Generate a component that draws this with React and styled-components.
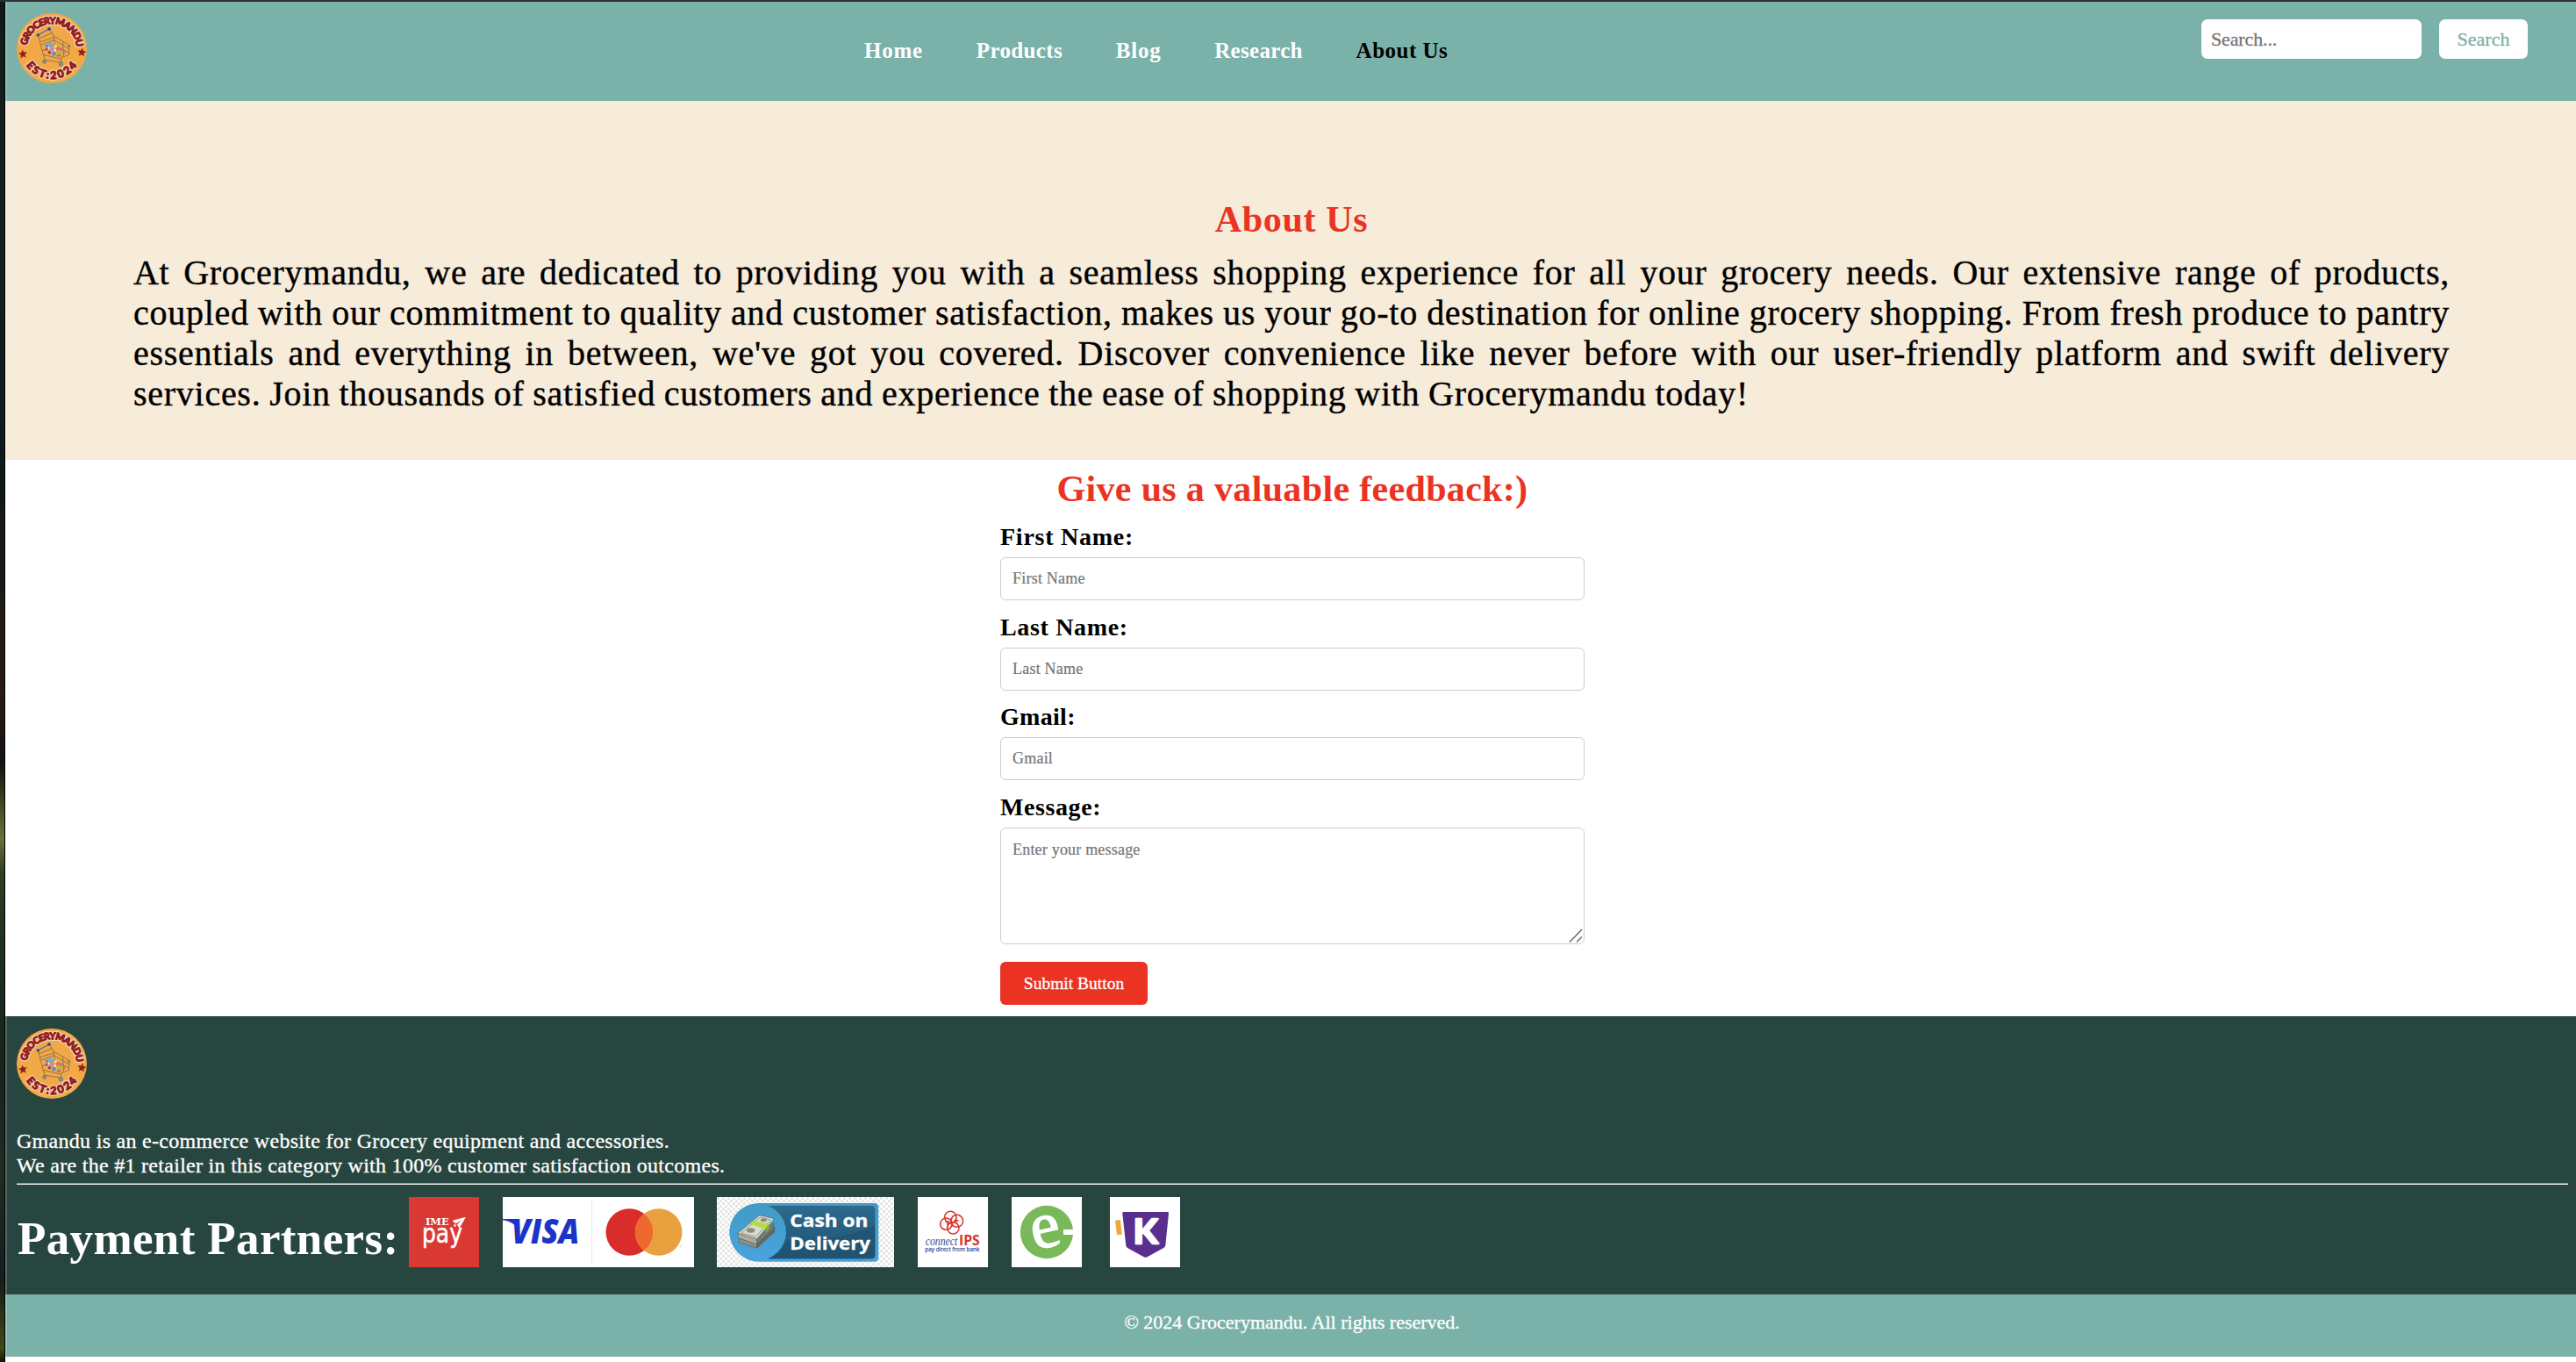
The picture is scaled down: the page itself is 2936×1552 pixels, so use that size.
import React from 'react';
import styled, { createGlobalStyle } from 'styled-components';

const serif = `"Liberation Serif", "Times New Roman", serif`;
const teal = '#7ab1a8';
const forest = '#284640';
const red = '#ea3323';

const GlobalStyle = createGlobalStyle`
  * { box-sizing: border-box; }
  body { margin: 0; background: #fff; font-family: ${serif}; color: #000; overflow: hidden; }
  h1, h2, p, ul { margin: 0; padding: 0; }
  input, textarea, button { font-family: inherit; }
`;

const Frame = styled.div`
  display: grid;
  grid-template-columns: 6px 1fr;
  height: 1552px;
  border-top: 2px solid #303033;
`;
const DesktopEdge = styled.div`
  border-right: 1px solid #000;
  background: linear-gradient(180deg, #0f1a1b 0%, #16211f 12%, #10191a 35%, #2a1a12 51%, #141210 56%, #4f5a2c 60%, #6d7038 61.5%, #2e3f22 64%, #1d3022 70%, #16241e 78%, #232b25 86%, #161e1c 94%, #3f4a14 99%, #12180a 100%);
`;
const Page = styled.div`display: flex; flex-direction: column;`;

const Header = styled.header`
  display: flex;
  align-items: flex-start;
  height: 113px;
  padding: 13px 55px 0 13px;
  background: ${teal};
  box-shadow: inset 2px 0 rgba(255, 255, 255, 0.2);
`;
const LogoSvg = styled.svg`display: block; width: 80px; height: 80px; flex: none;`;
const Nav = styled.ul`
  display: flex;
  gap: 60.8px;
  list-style: none;
  margin: 27.5px 0 0 886px;
`;
const NavItem = styled.li`
  font-size: 25px;
  line-height: 30px;
  font-weight: 700;
  white-space: nowrap;
  color: ${(p) => (p.$active ? '#000' : '#fff')};
  letter-spacing: ${(p) => p.$ls}px;
`;
const SearchForm = styled.div`display: flex; gap: 20px; margin: 7px 0 0 auto;`;
const SearchInput = styled.input`
  width: 251px;
  height: 45px;
  padding: 1px 11px 0;
  border: 0;
  border-radius: 7px;
  font-size: 22px;
  letter-spacing: -0.14px;
  background: #fff;
  -webkit-text-stroke: 0.3px;
  &::placeholder { color: #757575; opacity: 1; }
`;
const SearchButton = styled.button`
  width: 101px;
  height: 45px;
  padding: 1px 0 0;
  border: 0;
  border-radius: 7px;
  font-size: 22px;
  background: #fff;
  color: ${teal};
  -webkit-text-stroke: 0.3px;
`;

const Hero = styled.section`
  height: 409px;
  padding: 112px 144px 0 146px;
  background: #f7ebd9;
  box-shadow: inset 2px 0 rgba(255, 255, 255, 0.2);
`;
const Title = styled.h2`
  padding-left: ${(p) => p.$shift || 0}px;
  font-size: 42px;
  line-height: 46px;
  font-weight: 700;
  text-align: center;
  color: ${red};
  letter-spacing: ${(p) => p.$ls}px;
`;
const Intro = styled.p`
  margin-top: 14.5px;
  font-size: 40px;
  line-height: 46px;
  -webkit-text-stroke: 0.4px;
`;
const IntroLine = styled.span`
  display: block;
  white-space: nowrap;
  letter-spacing: 0.73px;
  word-spacing: -1px;
  text-align: justify;
  text-align-last: ${(p) => (p.$last ? 'left' : 'justify')};
`;

const Feedback = styled.section`height: 634px; padding-top: 10px; background: #fff;`;
const Form = styled.div`width: 666px; margin: 14.5px 0 0 1134px;`;
const Field = styled.div`position: relative; margin-bottom: 13px;`;
const Label = styled.label`
  display: block;
  padding-top: 0.5px;
  margin-bottom: 6px;
  font-size: 28px;
  line-height: 34px;
  font-weight: 700;
  letter-spacing: ${(p) => p.$ls}px;
`;
const Input = styled.input`
  display: block;
  width: 100%;
  height: 49px;
  padding: 0 13px;
  border: 1px solid #ccc;
  border-radius: 6px;
  font-size: 18px;
  letter-spacing: 0.22px;
  background: #fff;
  -webkit-text-stroke: 0.2px;
  &::placeholder { color: #757575; opacity: 1; }
`;
const Message = styled.textarea`
  display: block;
  width: 100%;
  height: 133px;
  padding: 13px;
  border: 1px solid #ccc;
  border-radius: 6px;
  resize: none;
  font-size: 18px;
  line-height: 22px;
  letter-spacing: 0.2px;
  background: #fff;
  -webkit-text-stroke: 0.2px;
  &::placeholder { color: #757575; opacity: 1; }
`;
const Grip = styled.svg`position: absolute; right: 2px; bottom: 2px; width: 16px; height: 16px;`;
const Submit = styled.button`
  display: block;
  width: 168px;
  height: 49px;
  margin-top: 20.5px;
  padding: 1px 0 0;
  border: 0;
  border-radius: 6px;
  font-size: 19.5px;
  color: #fff;
  background: ${red};
  -webkit-text-stroke: 0.3px;
`;

const Footer = styled.footer`
  height: 317px;
  padding: 14px 9px 0 13px;
  color: #fff;
  background: ${forest};
  box-shadow: inset 2px 0 rgba(255, 255, 255, 0.2);
`;
const Blurb = styled.p`
  padding-top: 34px;
  font-size: 24px;
  line-height: 28px;
  -webkit-text-stroke: 0.3px;
`;
const BlurbLine = styled.span`display: block; width: max-content; letter-spacing: 0.29px;`;
const Rule = styled.div`height: 2px; margin-top: 6px; border-top: 1px solid #9a9a9a; background: #eee;`;
const Partners = styled.div`display: flex; align-items: flex-start; margin-top: 14px;`;
const PartnersTitle = styled.h1`
  width: 447px;
  padding-left: 1px;
  margin-top: 16.5px;
  font-size: 53px;
  line-height: 60px;
  font-weight: 700;
  white-space: nowrap;
  letter-spacing: 0.36px;
`;
const Partner = styled.svg`
  display: block;
  flex: none;
  width: ${(p) => p.$w}px;
  height: 80px;
  margin-right: ${(p) => p.$gap}px;
  background: ${(p) => p.$bg || '#fff'};
`;
const Copyright = styled.div`
  height: 71px;
  padding: 18px 0 0 3px;
  text-align: center;
  font-size: 22px;
  line-height: 28px;
  color: #fff;
  background: ${teal};
  box-shadow: inset 2px 0 rgba(255, 255, 255, 0.2);
  -webkit-text-stroke: 0.3px;
`;

const Lettering = styled.text`
  font-family: Lato, "DejaVu Sans", sans-serif;
  font-weight: 900;
  fill: #94201c;
  stroke: ${(p) => (p.$halo ? '#fbe6d3' : '#94201c')};
  stroke-width: ${(p) => (p.$halo ? 9 : 3.5)};
  stroke-linejoin: round;
`;

const star = '0,-15 4.4,-5 15,-4 7,3.5 9.5,14 0,8.5 -9.5,14 -7,3.5 -15,-4 -4.4,-5';

function Logo({ id }) {
  return (
    <LogoSvg viewBox="0 0 240 240">
      <defs>
        <path id={`${id}-top`} d="M35.5 131 A85 85 0 1 1 204.5 131" />
        <path id={`${id}-bottom`} d="M26 168 A106 106 0 0 0 214 168" />
      </defs>
      <circle cx="120" cy="120" r="120" fill="#f2a945" />
      {[true, false].map((halo) => (
        <g key={String(halo)} aria-hidden={halo || undefined}>
          <Lettering $halo={halo} fontSize="33">
            <textPath href={`#${id}-top`} startOffset="20" textLength="250" lengthAdjust="spacing">GROCERYMANDU</textPath>
          </Lettering>
          <Lettering $halo={halo} fontSize="37">
            <textPath href={`#${id}-bottom`} startOffset="12" textLength="206" lengthAdjust="spacing">EST:2024</textPath>
          </Lettering>
        </g>
      ))}
      <polygon points={star} transform="translate(21 139) rotate(-8)" fill="#94201c" />
      <polygon points={star} transform="translate(223 133) rotate(8)" fill="#94201c" />
      <g fill="none" stroke="#7d6a4c" strokeWidth="2.5">
        <path d="M73 76 L91 142 L97 160 L150 168 L154 152 L178 142 L180 110 L126 78 L112 54" />
        <path d="M126 78 L131 112 L154 152 M84 108 L128 92 L178 122 M80 98 L126 84 M88 128 L130 110 L176 134 M91 142 L150 156 M158 97 L160 148 M78 86 L120 68" />
      </g>
      <g>
        <circle cx="103" cy="112" r="6" fill="#5f93cc" />
        <circle cx="116" cy="108" r="8" fill="#79a9dd" />
        <circle cx="133" cy="113" r="5" fill="#f2e08a" />
        <circle cx="150" cy="123" r="6" fill="#e8637c" />
        <circle cx="141" cy="121" r="5" fill="#e8637c" />
        <circle cx="102" cy="124" r="5" fill="#d0485f" />
        <circle cx="120" cy="124" r="7" fill="#b58fc4" />
        <circle cx="142" cy="133" r="6" fill="#9fc93a" />
        <circle cx="153" cy="133" r="5" fill="#9fc93a" />
        <circle cx="127" cy="139" r="7" fill="#5b8fca" />
        <circle cx="112" cy="134" r="5" fill="#8e3550" />
        <circle cx="142" cy="145" r="5" fill="#e6566a" />
        <circle cx="162" cy="135" r="4" fill="#e6566a" />
        <circle cx="132" cy="127" r="3" fill="#fff" />
        <circle cx="110" cy="119" r="3" fill="#fff" />
      </g>
      <path d="M73 75 L111 54" stroke="#3f6cb8" strokeWidth="4" />
      <circle cx="73" cy="75" r="5.5" fill="#2450a8" />
      <circle cx="111" cy="54" r="5.5" fill="#1f3f9c" />
      <circle cx="179" cy="112" r="3.5" fill="#3f6cb8" />
      <circle cx="95" cy="166" r="6" fill="#8c9096" stroke="#5c6470" strokeWidth="2" />
      <circle cx="151" cy="173" r="7" fill="#8c9096" stroke="#5c6470" strokeWidth="2" />
    </LogoSvg>
  );
}

const ImePay = () => (
  <Partner viewBox="0 0 240 240" $w={80} $gap={27} $bg="#da3832">
    <text x="57" y="97" fontFamily='"DejaVu Serif", serif' fontWeight="700" fontSize="31" fill="#fff" textLength="80" lengthAdjust="spacingAndGlyphs">IME</text>
    <text x="45" y="156" fontFamily='"DejaVu Sans", sans-serif' fontSize="88" fill="#fff" stroke="#fff" strokeWidth="1.5" textLength="138" lengthAdjust="spacingAndGlyphs">pay</text>
    <path d="M150 81 L193 70 L172 106 L166 94 L184 76 L160 90 Z M154 95 L162 96 L157 102 Z" fill="#fff" stroke="#fff" strokeWidth="2" />
  </Partner>
);

const Cards = () => (
  <Partner viewBox="0 0 654 240" $w={218} $gap={26}>
    <path d="M0 75 H44 L54 112 C42 92 24 83 0 79 Z" fill="#1a34c8" />
    <text x="30" y="158" fontFamily='"Open Sans", sans-serif' fontStyle="italic" fontWeight="800" fontSize="114" fill="#1a34c8" textLength="232" lengthAdjust="spacingAndGlyphs">VISA</text>
    <rect x="303" y="10" width="3" height="218" fill="#ededed" />
    <circle cx="433" cy="120" r="80.5" fill="#d82d2b" />
    <circle cx="533" cy="120" r="80.5" fill="#e9a140" />
    <path d="M483 57 A80.5 80.5 0 0 1 483 183 A80.5 80.5 0 0 1 483 57 Z" fill="#ef682d" />
    <rect x="605" y="166" width="7" height="4" fill="#f3d3a4" />
  </Partner>
);

const CashOnDelivery = () => (
  <Partner viewBox="0 0 606 240" $w={202} $gap={27}>
    <defs>
      <pattern id="checks" width="18" height="18" patternUnits="userSpaceOnUse">
        <rect width="18" height="18" fill="#fff" />
        <path d="M0 0H9V9H0Z M9 9H18V18H9Z" fill="#e6e6e6" />
      </pattern>
      <linearGradient id="pill" x1="0" y1="0" x2="0" y2="1">
        <stop offset="0" stopColor="#419bc4" />
        <stop offset="1" stopColor="#4aa3dc" />
      </linearGradient>
      <linearGradient id="plate" x1="0" y1="0" x2="0" y2="1">
        <stop offset="0" stopColor="#2c6a8d" />
        <stop offset="1" stopColor="#225474" />
      </linearGradient>
    </defs>
    <rect width="606" height="240" fill="url(#checks)" />
    <path d="M144 21 H538 Q553 21 553 36 V206 Q553 221 538 221 H144 A100 100 0 0 1 144 21 Z" fill="url(#pill)" />
    <path d="M160 30 H528 Q541 30 541 43 V198 Q541 211 528 211 H160 Z" fill="url(#plate)" />
    <path d="M240 150 Q430 150 541 96 V198 Q541 211 528 211 H180 Z" fill="#215170" opacity="0.7" />
    <circle cx="140" cy="120" r="97" fill="url(#pill)" />
    <g stroke="#4c4f45" strokeWidth="1.5">
      <path d="M78 142 L138 160 L136 174 L76 156 Z" fill="#8d9086" />
      <path d="M138 160 L198 104 L197 120 L137 174 Z" fill="#66695f" />
      <path d="M72 124 L137 144 L138 162 L73 140 Z" fill="#aaad9f" />
      <path d="M137 144 L194 88 L195 106 L138 162 Z" fill="#777a6e" />
      <path d="M72 124 L146 62 L196 74 L137 144 Z" fill="#d9dccd" />
      <path d="M84 123 L148 69 L184 78 L134 136 Z" fill="none" />
    </g>
    <path d="M124 80 L178 94 L166 109 L112 92 Z" fill="#b6dc3a" />
    <path d="M166 109 L178 94 L180 108 L167 122 Z" fill="#86b02a" />
    <ellipse cx="160" cy="79" rx="11" ry="6" fill="#8a8e80" />
    <ellipse cx="116" cy="114" rx="14" ry="8" fill="#8a8e80" />
    <g fontFamily='"Open Sans", "Noto Sans", sans-serif' fontWeight="700" fontSize="61" fill="#fff" stroke="#fff" strokeWidth="1">
      <text x="250" y="101" textLength="267" lengthAdjust="spacingAndGlyphs">Cash on</text>
      <text x="250" y="180" textLength="275" lengthAdjust="spacingAndGlyphs">Delivery</text>
    </g>
  </Partner>
);

const ConnectIps = () => (
  <Partner viewBox="0 0 240 240" $w={80} $gap={27}>
    <g fill="none" stroke="#da352f" strokeWidth="4.5">
      <circle cx="112" cy="69" r="20" />
      <circle cx="134" cy="82" r="21" />
      <circle cx="121" cy="106" r="20" />
      <circle cx="97" cy="92" r="20" />
      <path d="M94 84 H108 M102 84 V104 M124 80 H140 M131 72 V88 M118 74 Q108 77 116 88 T112 102" />
    </g>
    <text x="26" y="165" fontFamily='"Liberation Serif", serif' fontStyle="italic" fontSize="43" fill="#2a4a9e" textLength="110" lengthAdjust="spacingAndGlyphs">connect</text>
    <text x="141" y="165" fontFamily='"Open Sans", sans-serif' fontWeight="700" fontSize="49" fill="#d9342e" textLength="71" lengthAdjust="spacingAndGlyphs">IPS</text>
    <text x="25" y="187" fontFamily='"Noto Sans", sans-serif' fontSize="19" fill="#2a4a9e" stroke="#2a4a9e" strokeWidth="0.5" textLength="186" lengthAdjust="spacingAndGlyphs">pay direct from bank</text>
  </Partner>
);

const Esewa = () => (
  <Partner viewBox="0 0 240 240" $w={80} $gap={32}>
    <circle cx="120" cy="120" r="90.5" fill="#79b95a" />
    <text x="66" y="172" transform="rotate(-12 114 121)" fontFamily='"Liberation Serif", serif' fontSize="226" fill="#fff" stroke="#fff" strokeWidth="4">e</text>
    <rect x="177" y="111" width="35" height="18" fill="#fff" />
  </Partner>
);

const Khalti = () => (
  <Partner viewBox="0 0 240 240" $w={80} $gap={0}>
    <polygon points="18,80 36,78 41,128 24,130" fill="#efa83c" />
    <path d="M46 51 H197 Q202 51 201 57 L190 165 Q189 170 185 173 L128 205 Q122 208 116 205 L60 174 Q56 171 55 166 L43 57 Q42 51 46 51 Z" fill="#5a2e8e" />
    <text x="80" y="160" fontFamily="Lato, sans-serif" fontWeight="700" fontSize="117" fill="#fff" stroke="#fff" strokeWidth="8" strokeLinejoin="round" textLength="84" lengthAdjust="spacingAndGlyphs">K</text>
  </Partner>
);

const links = [
  { label: 'Home', ls: 0.78 },
  { label: 'Products', ls: 0.36 },
  { label: 'Blog', ls: 0.74 },
  { label: 'Research', ls: 0.3 },
  { label: 'About Us', ls: 0.5, active: true },
];

const fields = [
  { label: 'First Name:', ls: 0.75, placeholder: 'First Name' },
  { label: 'Last Name:', ls: 0.65, placeholder: 'Last Name' },
  { label: 'Gmail:', ls: 0.3, placeholder: 'Gmail' },
];

export default function App() {
  return (
    <>
      <GlobalStyle />
      <Frame>
        <DesktopEdge />
        <Page>
          <Header>
            <Logo id="head" />
            <Nav>
              {links.map((l) => (
                <NavItem key={l.label} $ls={l.ls} $active={l.active}>{l.label}</NavItem>
              ))}
            </Nav>
            <SearchForm>
              <SearchInput placeholder="Search..." />
              <SearchButton>Search</SearchButton>
            </SearchForm>
          </Header>
          <Hero>
            <Title $ls={0.65}>About Us</Title>
            <Intro>
              <IntroLine>At Grocerymandu, we are dedicated to providing you with a seamless shopping experience for all your grocery needs. Our extensive range of products,</IntroLine>
              <IntroLine>coupled with our commitment to quality and customer satisfaction, makes us your go-to destination for online grocery shopping. From fresh produce to pantry</IntroLine>
              <IntroLine>essentials and everything in between, we've got you covered. Discover convenience like never before with our user-friendly platform and swift delivery</IntroLine>
              <IntroLine $last>services. Join thousands of satisfied customers and experience the ease of shopping with Grocerymandu today!</IntroLine>
            </Intro>
          </Hero>
          <Feedback>
            <Title $ls={0.33} $shift={4}>Give us a valuable feedback:)</Title>
            <Form>
              {fields.map((f) => (
                <Field key={f.label}>
                  <Label $ls={f.ls}>{f.label}</Label>
                  <Input placeholder={f.placeholder} />
                </Field>
              ))}
              <Field>
                <Label $ls={0.58}>Message:</Label>
                <Message placeholder="Enter your message" />
                <Grip viewBox="0 0 16 16"><path d="M1 15.5 L15 1 M9 15.5 L15 9.5" stroke="#666" strokeWidth="1.4" /></Grip>
              </Field>
              <Submit>Submit Button</Submit>
            </Form>
          </Feedback>
          <Footer>
            <Logo id="foot" />
            <Blurb>
              <BlurbLine>Gmandu is an e-commerce website for Grocery equipment and accessories.</BlurbLine>
              <BlurbLine>We are the #1 retailer in this category with 100% customer satisfaction outcomes.</BlurbLine>
            </Blurb>
            <Rule />
            <Partners>
              <PartnersTitle>Payment Partners:</PartnersTitle>
              <ImePay />
              <Cards />
              <CashOnDelivery />
              <ConnectIps />
              <Esewa />
              <Khalti />
            </Partners>
          </Footer>
          <Copyright>© 2024 Grocerymandu. All rights reserved.</Copyright>
        </Page>
      </Frame>
    </>
  );
}
